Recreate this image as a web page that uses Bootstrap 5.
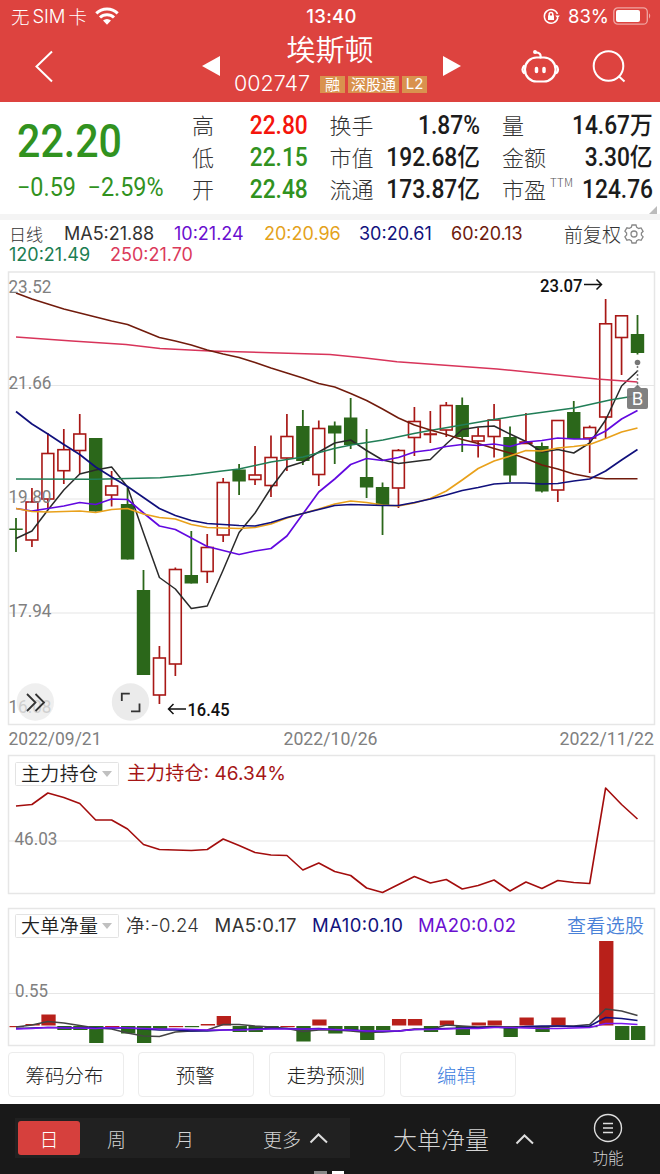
<!DOCTYPE html>
<html lang="zh-CN">
<head>
<meta charset="utf-8">
<meta name="viewport" content="width=device-width, initial-scale=1">
<title>埃斯顿 002747</title>
<link href="https://cdn.jsdelivr.net/npm/bootstrap@5.3.0/dist/css/bootstrap.min.css" rel="stylesheet">
<style>
  body { width: 660px; height: 1174px; overflow: hidden; background: #fff; color: #333; font-family: Inter, "Noto Sans CJK SC", sans-serif; font-size: 18px; line-height: 1; }
  svg { display: block; flex: none; }
  .cjk { font-family: "Noto Sans CJK SC", sans-serif; }
  .din { display: inline-block; font-family: Roboto, "Noto Sans CJK SC", sans-serif; font-weight: 500; transform: scaleX(.91); transform-origin: 100% 50%; white-space: nowrap; }
  .din-left { transform-origin: 0 50%; }
  .price-big .din { transform: scaleX(.885); }
  .price-chg .din { transform: scaleX(.935); }
  .top-red { height: 102px; background: #dd433f; color: #fff; }
  .status-row { height: 32px; font-size: 18.5px; padding: 0 8px 0 11px; }
  .status-row > div { flex: 1 1 0; }
  .sim { margin: 0 3px; letter-spacing: -.1px; font-weight: 350; }
  .clock { letter-spacing: .3px; }
  .title-row { height: 70px; display: grid; grid-template-columns: 200px 34px 194px 34px 59px 67px 72px; }
  .stock-name { font-size: 29px; line-height: 33px; font-weight: 350; margin-right: 2px; }
  .stock-code { font-size: 21.5px; letter-spacing: 0; width: 86px; font-weight: 350; }
  .tag-gold { background: #d9924e; height: 17px; line-height: 16px; font-size: 15px; white-space: nowrap; flex: none; text-align: center; }
  .tag-1 { width: 25px; }
  .tag-3 { width: 51px; margin: 0 3px; }
  .quote { height: 112px; display: grid; grid-template-columns: 192px 115.5px 22px 150.500px 22px 151px; padding-top: 8px; }
  .price-big { font-size: 46.5px; line-height: 60px; }
  .price-chg { font-size: 25px; line-height: 32px; }
  .q-row { height: 32px; display: flex; justify-content: space-between; align-items: center; }
  .q-row > .cjk { font-size: 22px; font-weight: 300; color: #333; line-height: 28px; height: 32px; }
  .q-row > .din { font-size: 25px; line-height: 32px; color: #1c1c1c; }
  .green, .q-row > .green { color: #31921f; }
  .hot, .q-row > .hot { color: #f5150c; }
  .ttm { font-size: 11.5px; color: #555; letter-spacing: .3px; top: -.95em; }
  .band { height: 6px; background: #f4f4f4; }
  .ma-row { height: 50px; padding: 4px 14px 0 9px; font-size: 18px; }
  .ma-line { height: 20px; line-height: 20px; margin-bottom: 1px; }
  .ma-line > span { flex: none; }
  .btn-tool { height: 45px; width: 116px; border: 1px solid #ececec; border-radius: 4px; font-size: 19.5px; font-weight: 300; color: #222; padding: 0 2px 0 0; line-height: 43px; background: #fff; }
  .btn-edit { color: #3f7fe0; }
  .tools { height: 57px; padding: 5px 0 0 7.500px; gap: 14.700px; }
  .bottom-bar { height: 70px; background: #191919; color: #d4d4d4; }
  .period { margin: 14px 0 0 15px; width: 335px; height: 40px; background: #212121; font-size: 19px; font-weight: 300; }
  .period-on { width: 62px; height: 34px; margin-left: 3px; background: #d6403d; color: #fff; border-radius: 3px; }
  .indicator { margin-left: 43px; width: 185px; font-size: 24px; }
  .fn { font-size: 15.5px; font-weight: 300; width: 60px; }
  .num { font-family: Roboto, sans-serif; }
  .home-mark { left: 314px; }
</style>
</head>
<body>
<header class="top-red">
  <div class="status-row d-flex align-items-center">
    <div class="d-flex align-items-center"><span class="cjk fw-light">无</span><span class="sim">SIM</span><span class="cjk fw-light">卡</span>
      <svg width="24" height="18" viewBox="0 0 24 18" class="ms-2" fill="none" stroke="#fff" stroke-width="3"><path d="M1.300 6.400a15.300 15.300 0 0 1 21.400 0M5 10.500a10 10 0 0 1 14 0"/><path d="M8 13.500a6 6 0 0 1 8 0L12 17.700z" fill="#fff" stroke="none"/></svg></div>
    <div class="clock text-center fw-medium">13:40</div>
    <div class="d-flex align-items-center justify-content-end">
      <svg width="17" height="17" viewBox="0 0 17 17" fill="none" stroke="#fff" stroke-width="1.500"><path d="M14.500 6a6.800 6.800 0 1 0 .3 3.800"/><path d="M12.200 7.500h4.600l-2.200 3z" fill="#fff" stroke="none"/><rect x="5" y="7.500" width="6" height="4.500" fill="#fff" stroke="none"/><path d="M6.200 8V6.300a1.800 1.800 0 0 1 3.600 0V8"/></svg>
      <span class="ms-2 me-1">83%</span>
      <svg width="39" height="18" viewBox="0 0 39 18"><rect x=".8" y=".8" width="33.500" height="16.400" rx="4" fill="none" stroke="#f0a5a2" stroke-width="1.300"/><rect x="3" y="3" width="24" height="12" rx="2" fill="#fff"/><path d="M36 6.300v5.400q2.500-2.700 0-5.400" fill="#f0a5a2"/></svg>
    </div>
  </div>
  <div class="title-row">
    <svg width="200" height="70" fill="none" stroke="#fff" stroke-width="2"><path d="M52 19.500 36.500 34.500 52 49.500"/></svg>
    <svg width="34" height="70"><path d="M2 34 20 24v20z" fill="#fff"/></svg>
    <div class="d-flex flex-column align-items-center">
      <div class="stock-name cjk">埃斯顿</div>
      <div class="d-flex align-items-center w-100" style="height:38px"><span class="stock-code">002747</span><span class="tag-gold tag-1 cjk">融</span><span class="tag-gold tag-3 cjk">深股通</span><span class="tag-gold tag-1">L2</span></div>
    </div>
    <svg width="34" height="70"><path d="M33 34 15 24v20z" fill="#fff"/></svg>
    <i></i>
    <svg width="67" height="70" fill="none" stroke="#fff" stroke-width="2.200" stroke-linecap="round"><rect x="4" y="25.500" width="30.500" height="24" rx="11.500"/><path d="M3 34q-3 3.500 0 7M35.500 34q3 3.500 0 7M19.500 25.500q1-5-5-5.200"/><circle cx="14" cy="20" r="1.200" fill="#fff" stroke-width="1.500"/><path d="M15.500 36.500v3M23 36.500v3" stroke-width="3.500"/></svg>
    <svg width="72" height="70" fill="none" stroke="#fff" stroke-width="2"><circle cx="20.500" cy="34" r="14.800"/><path d="m30.500 44 6 5.500"/></svg>
  </div>
</header>

<section class="quote">
  <div style="padding-left:17px">
    <div class="price-big green"><span class="din din-left">22.20</span></div>
    <div class="price-chg green"><span class="din din-left fw-normal">−0.59&nbsp; −2.59%</span></div>
  </div>
  <div>
    <div class="q-row"><span class="cjk">高</span><span class="din hot">22.80</span></div>
    <div class="q-row"><span class="cjk">低</span><span class="din green">22.15</span></div>
    <div class="q-row"><span class="cjk">开</span><span class="din green">22.48</span></div>
  </div>
  <i></i>
  <div>
    <div class="q-row"><span class="cjk">换手</span><span class="din">1.87%</span></div>
    <div class="q-row"><span class="cjk">市值</span><span class="din">192.68亿</span></div>
    <div class="q-row"><span class="cjk">流通</span><span class="din">173.87亿</span></div>
  </div>
  <i></i>
  <div>
    <div class="q-row"><span class="cjk">量</span><span class="din">14.67万</span></div>
    <div class="q-row"><span class="cjk">金额</span><span class="din">3.30亿</span></div>
    <div class="q-row"><span class="cjk">市盈<sup class="ttm ms-1">TTM</sup></span><span class="din">124.76</span></div>
    <svg width="157" height="8"><path d="M155 0v8h-8z" fill="#bbb"/></svg>
  </div>
</section>
<div class="band"></div>

<section class="ma-row">
  <div class="ma-line d-flex align-items-center">
    <span class="cjk fw-light" style="width:55px;font-size:17px">日线</span>
    <span style="width:110px">MA5:21.88</span>
    <span style="width:90px;color:#6a0fd0">10:21.24</span>
    <span style="width:95px;color:#e4a21b">20:20.96</span>
    <span style="width:92px;color:#12127d">30:20.61</span>
    <span style="width:113px;color:#6e1a0c">60:20.13</span>
    <span class="cjk fw-light" style="font-size:19px">前复权</span>
    <svg width="20" height="20" viewBox="0 0 20 20" style="margin-left:3px" fill="none" stroke="#888" stroke-width="1.300"><path d="M8 1h4l.7 2.400 2 1.100 2.400-.6 2 3.400-1.700 1.800v2l1.700 1.800-2 3.400-2.400-.6-2 1.100L12 19H8l-.7-2.300-2-1.100-2.400.6-2-3.400 1.700-1.800v-2L.9 7.200l2-3.400 2.400.6 2-1.100z"/><circle cx="10" cy="10" r="3"/></svg>
  </div>
  <div class="ma-line d-flex"><span style="width:101px;color:#1c7d52">120:21.49</span><span style="color:#db3a5b">250:21.70</span></div>
</section>

<svg id="chart" width="660" height="777" viewBox="0 270 660 777" class="num">
  <g fill="none" stroke="#e6e6e6" stroke-width="1.500">
    <rect x="8.500" y="272" width="646" height="452.500"/>
    <path d="M9 385.500H654M9 499H654M9 613H654" stroke-width="1.200"/>
    <rect x="8.500" y="755.500" width="646" height="138"/><path d="M9 841H654" stroke-width="1.200"/>
    <rect x="8.500" y="908.500" width="646" height="137"/><path d="M9 993.500H654" stroke-width="1.200"/>
  </g>
  <g id="candles"></g>
  <g id="lines" fill="none" stroke-linejoin="round"></g>
  <g id="bars"></g>
  <g id="flow" fill="none" stroke-linejoin="round" stroke-width="1.400"></g>
  <g font-size="18" fill="#808080">
    <text x="8.500" y="293" textLength="43" lengthAdjust="spacingAndGlyphs">23.52</text>
    <text x="8.500" y="389" textLength="43" lengthAdjust="spacingAndGlyphs">21.66</text>
    <text x="8.500" y="503" textLength="43" lengthAdjust="spacingAndGlyphs">19.80</text>
    <text x="8.500" y="617" textLength="43" lengthAdjust="spacingAndGlyphs">17.94</text>
    <text x="8.500" y="713" textLength="43" lengthAdjust="spacingAndGlyphs">16.08</text>
    <text x="8.500" y="745" textLength="93" lengthAdjust="spacingAndGlyphs">2022/09/21</text>
    <text x="283.500" y="745" textLength="94" lengthAdjust="spacingAndGlyphs">2022/10/26</text>
    <text x="559.500" y="745" textLength="94.500" lengthAdjust="spacingAndGlyphs">2022/11/22</text>
    <text x="14.500" y="845" textLength="43" lengthAdjust="spacingAndGlyphs">46.03</text>
    <text x="15" y="997" textLength="33" lengthAdjust="spacingAndGlyphs">0.55</text>
  </g>
  <g font-size="19" font-weight="500" fill="#111">
    <text x="540" y="291.500" textLength="42.500" lengthAdjust="spacingAndGlyphs">23.07</text>
    <text x="187.500" y="716" textLength="42" lengthAdjust="spacingAndGlyphs">16.45</text>
    <path d="M584 284.500h17M596.500 279.500l5 5-5 5M186 709h-17M173.500 704l-5 5 5 5" fill="none" stroke="#111" stroke-width="1.500"/>
  </g>
  <g fill="none" stroke="#333" stroke-width="1.800">
    <circle cx="35.300" cy="702" r="18.700" fill="#e9e9e9" fill-opacity=".75" stroke="none"/><path d="m27 694 8.500 8.500L27 711M35.500 694l8.500 8.500-8.500 8.500"/>
    <circle cx="130.500" cy="702" r="18.700" fill="#ebebeb" stroke="none"/><path d="M121.800 701v-7.300h8M131 711.300h8.500v-7.800"/>
  </g>
  <path d="M637.500 366v22" stroke="#777" stroke-width="1.500" stroke-dasharray="2 2"/>
  <circle cx="637.500" cy="362.500" r="2.800" fill="#777"/>
  <path d="M629 388h5l3.500-3.500 3.500 3.500h5a2 2 0 0 1 2 2v17a2 2 0 0 1-2 2h-17a2 2 0 0 1-2-2v-17a2 2 0 0 1 2-2" fill="#777" fill-opacity=".93"/>
  <text x="637.500" y="405" font-size="17.500" fill="#fff" text-anchor="middle" font-family="Inter">B</text>
  <g fill="#fff" stroke="#e3e3e3"><rect x="15.500" y="762.500" width="103" height="23" rx="1"/><rect x="15.500" y="914.500" width="103" height="23" rx="1"/></g>
  <path d="M102 771h10l-5 6zM102 923h10l-5 6z" fill="#c0c0c0"/>
  <g font-family="Inter, 'Noto Sans CJK SC', sans-serif" font-size="19">
    <text x="21" y="781" fill="#222" font-weight="350" textLength="77">主力持仓</text>
    <text x="127" y="780" fill="#a51616" textLength="159">主力持仓: 46.34%</text>
    <text x="21" y="933" fill="#222" font-weight="350" textLength="77">大单净量</text>
    <text x="126" y="932" fill="#333" font-size="18.500" font-weight="350" textLength="73">净:-0.24</text>
    <text x="214.500" y="932" fill="#333" font-size="18.500" textLength="82">MA5:0.17</text>
    <text x="312" y="932" fill="#12127d" font-size="18.500" textLength="91">MA10:0.10</text>
    <text x="418" y="932" fill="#6a0fd0" font-size="18.500" textLength="98">MA20:0.02</text>
    <text x="567" y="933" fill="#4a82d8" font-size="19" font-weight="350" textLength="77">查看选股</text>
  </g>
</svg>

<div class="tools d-flex">
  <button class="btn btn-tool cjk">筹码分布</button><button class="btn btn-tool cjk">预警</button><button class="btn btn-tool cjk">走势预测</button><button class="btn btn-tool btn-edit cjk">编辑</button>
</div>

<footer class="bottom-bar d-flex cjk position-relative">
  <div class="period d-flex align-items-center">
    <div class="period-on d-flex align-items-center justify-content-center">日</div>
    <span style="margin-left:27px">周</span><span style="margin-left:49px">月</span><span style="margin-left:69px">更多</span>
    <svg width="20" height="12" style="margin-left:8px" fill="none" stroke="#ddd" stroke-width="2"><path d="m1.500 10.500 8-8 8.500 8"/></svg>
  </div>
  <div class="indicator d-flex align-items-center fw-light">大单净量
    <svg width="20" height="12" style="margin-left:26px" fill="none" stroke="#ddd" stroke-width="2"><path d="m1.500 10.500 8-8 8.500 8"/></svg></div>
  <div class="fn d-flex flex-column align-items-center">
    <svg width="30" height="30" style="margin-top:9px" fill="none" stroke="#ddd" stroke-width="1.400"><circle cx="15" cy="15" r="13.500"/><path d="M10 10.500h10M10 15h10M10 19.500h10"/></svg>
    <span style="margin-top:7px">功能</span>
  </div>
  <svg class="home-mark position-absolute bottom-0" width="32" height="3"><path d="M0 0h13v3H0z" fill="#888"/><path d="M18 0h12v3H18z" fill="#fff"/></svg>
</footer>

<script src="https://cdn.jsdelivr.net/npm/bootstrap@5.3.0/dist/js/bootstrap.bundle.min.js"></script>
<script>
  const X = i => +(16 + 15.936 * i).toFixed(2);
  const RED = '#a81816', GREEN = '#2b671a';
  // direction, high, top, bottom, low
  const days = [['g',518,528.5,530,552],['r',488,502,540,547],['r',433,453.5,499,508],['r',429,449.7,470.7,484],['r',414,434,450.5,474],['g',438,438,511.5,511.5],['r',471,486,495,506.500],['g',487,504,559.5,559.5],['g',570,590,675,675],['r',646,658,695,704],['r',567.5,569.5,664,676],['g',531,575,583.5,583.5],['r',534,547.5,571.5,583],['r',478,482.5,535,542],['g',464,469.5,481.5,495],['r',446,475,479.5,485],['r',435.5,457.5,485.5,497],['r',414,436.5,458,471],['g',410,426,461,465],['r',420.5,428.5,474.5,486],['g',421.5,425.5,433.5,464],['g',398,417.5,445,449],['g',429,477,487.5,498],['g',482.5,487,506,535],['r',449,450.5,488,508],['r',407,421.5,437.5,456],['r',411,434,434.5,443],['r',402,405.5,430,437],['g',397.5,405,437,452],['r',427.5,436,441,457.5],['r',404,420,436.500,457.5],['g',426.5,437,475.5,482],['r',413,442,443.5,444],['g',442.5,446,491.5,492.5],['r',420,420.5,490,502],['g',401,412,439,439],['r',425.5,427.5,438,473],['r',299,323.8,417,438],['r',315.5,315.8,337.5,375],['g',315,334,353,354.5]];
  document.getElementById('candles').innerHTML = days.map(([d, h, t, b, l], i) => {
    const x = X(i);
    return d === 'g'
      ? `<path d="M${x} ${h}V${l}" stroke="${GREEN}" stroke-width="1.800"/><rect x="${x - 6.700}" y="${t}" width="13.400" height="${b - t}" fill="${GREEN}"/>`
      : `<path d="M${x} ${h}V${t}M${x} ${b}V${l}" stroke="${RED}" stroke-width="1.700"/><rect x="${x - 5.900}" y="${t}" width="11.800" height="${b - t}" fill="none" stroke="${RED}" stroke-width="1.600"/>`;
  }).join('');
  const pts = a => a.map((y, i) => Array.isArray(y) ? y.join() : X(i) + ',' + y).join(' ');
  const poly = (a, c, w = 1.5) => `<polyline points="${pts(a)}" stroke="${c}" stroke-width="${w}"/>`;
  document.getElementById('lines').innerHTML =
    poly([538.5,531,510,490,474,470,467,487,533,577.5,589,608.5,606,570,532.5,513,488,467,462,452,443,440,450.5,460,463.5,461.5,459.5,444,429.5,427,426,434,441.5,452,449.5,453,443,420,386,371], '#2a2a2a') +
    poly([[16,479],[95,479.3],[160,477.7],[191,475],[220,471.300],[239,469],[271,462],[303,457],[334,448.5],[351,445],[383,440],[414,433.5],[430,430.5],[494,419.5],[526,414.5],[574,408],[610,400],[637.5,395.500]], '#217e57') +
    poly([[16,337],[72,341],[126,344.5],[160,348.5],[210,351],[330,354.5],[363,357.7],[397,361.700],[497,369],[597,379],[637.5,382]], '#d8345a') +
    poly([293,299,304,309,313,317,321,324.5,331,337.5,341,345,350,354,357.5,362.5,368,373,378,383.5,387,393.5,400.5,409,418,425,430,434.5,439.5,443.5,448.5,453,458.5,465,469,474,477,478.7,478.7,478.7], '#711b0c') +
    poly([508.5,511,508.5,506,502.5,504.5,499,499.5,513,526,529.5,538,546.5,550.5,554.5,551,548.5,536,514,492,479,464.5,458.5,460.5,457.5,452,450,446.5,444.5,445.5,444,446.5,442,440.5,438,439,439,431,419,410.5], '#6209e0', 1.7) +
    poly([508.5,511.5,512,511.5,511,512.5,509.5,508.5,514,517.5,519,524.5,527.5,528,528.500,527.5,524,518,513.5,509,504,501,502.5,505,506,503,498.5,491,480,468.5,461,456,450.5,451,448,446.5,444.5,438.5,432,428], '#e9a11b', 1.7) +
    poly([411.5,424,434,444.5,454.5,467,477,486.5,497.5,508.5,515.5,520.5,523.5,524.5,525.5,526,522.5,517.5,513.5,509.5,505.5,504.5,505,505.500,505.5,502.5,499,495,490.5,487.5,484,483,483,484,483.5,481,479,471,460,449.5], '#10107c', 1.7) +
    poly([806,804.5,793,797.5,803.5,820,820,829,844.5,849.5,850,850.5,849.5,839,845.5,852.5,855,855.5,870,863,871.5,875.5,888,892.5,884.5,876.5,883,879.5,889,885.5,880,891,882,888.5,880.5,882.5,883.5,788,804.5,819], '#a30d0d', 1.6);
  // positive values rise from the zero line, negative ones fall below it
  const net = [-.1,1.5,11,-4,-4,-17,-.1,-7.5,-17,-3,-.1,-1.2,1.5,9.5,-6,-6,-3,-.1,-15.5,6,-7.5,-4,-14,-4,6.5,6.5,-6,5,-9,3,5,-11,8,-6,8,-1.2,-1.2,84.5,-14,-14];
  document.getElementById('bars').innerHTML = net.map((v, i) => {
    const red = v > 0 || v === -.1, h = Math.max(Math.abs(v), 1.2);
    return `<rect x="${X(i) - 6.500}" y="${v > 0 ? 1025.5 - v : 1026}" width="14.300" height="${h}" fill="${red ? '#b8201a' : GREEN}"/>`;
  }).join('');
  document.getElementById('flow').innerHTML =
    poly([1027,1025,1021.5,1023,1025.5,1028,1029,1033,1036,1036.5,1032,1031,1030,1024.5,1024.5,1026,1027,1028.5,1031.5,1030,1030,1031,1032.5,1032,1031,1029,1029.5,1025,1026,1027,1026.5,1027,1027,1027,1026,1026,1024.5,1009,1011,1015.5], '#444') +
    poly([1028.5,1028,1027.5,1027.5,1028,1028,1028,1028,1029,1030,1030,1031,1031,1030,1029.5,1029,1028.500,1028.500,1029,1028.5,1029.5,1030,1031,1031.5,1031,1029.5,1029,1028.5,1028,1027.5,1027,1028,1026.5,1026,1026,1026.5,1026,1017.5,1018.5,1020.5], '#12127d') +
    poly([1029,1028.5,1027.5,1028,1028,1028.5,1027.5,1028,1028.5,1029,1029,1029.5,1030,1030,1030,1029.5,1029,1029,1029,1029,1029.5,1030,1031,1031,1031,1029.5,1029.5,1029,1028.5,1028.5,1027.5,1027.5,1028,1028.5,1028.5,1028,1027.5,1023.5,1023.5,1024.5], '#7a16f0');
</script>
</body>
</html>
